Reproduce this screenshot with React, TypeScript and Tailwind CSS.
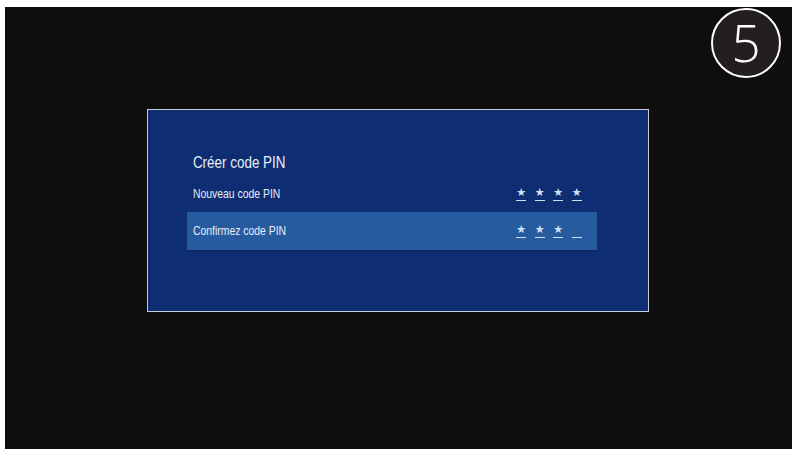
export default function App() {
  const sans = { fontFamily: '"Liberation Sans", Arial, sans-serif' };
  return (
    <div className="relative flex h-[449px] w-full bg-white pl-[5px] pt-[7px]">
      <div className="flex-1 bg-[#0e0e0e] pl-[142px] pt-[102px]" style={sans}>
        <div className="flex h-[203px] w-[502px] flex-col border border-[#c3cbd9] bg-[#0f2d72] pl-[39px] pr-[51px] pt-[41px]">
          <h1 className="h-[24px] origin-left scale-x-[0.84] pl-[7px] text-[16px] leading-[24px] text-[#e8eef8]">Créer code PIN</h1>
          <div className="flex h-[37px] items-center justify-between pl-[6px] pr-[15px] text-[13px] text-[#e8eef8]">
            <span className="origin-left scale-x-[0.8]">Nouveau code PIN</span>
            <PinDigits values={["*", "*", "*", "*"]} />
          </div>
          <div className="flex h-[38px] items-center justify-between bg-[#265c9f] pl-[6px] pr-[15px] text-[13px] text-[#e8eef8] shadow-[0_2px_0_#0c2a66]">
            <span className="origin-left scale-x-[0.8]">Confirmez code PIN</span>
            <PinDigits values={["*", "*", "*", "_"]} />
          </div>
        </div>
      </div>
      <div className="absolute left-[711px] top-[8px] flex h-[70px] w-[70px] items-center justify-center rounded-full border-2 border-white bg-[#231f20] pb-[2px] text-[51px] leading-none text-white" style={{ fontFamily: '"Open Sans", sans-serif', fontWeight: 350 }}>
        5
      </div>
    </div>
  );
}

function PinDigits({ values }: { values: string[] }) {
  return (
    <div className="flex gap-[8px]">
      {values.map((v, i) => (
        <span key={i} className="flex w-[10.5px] flex-col items-center text-[#cfe0f6]">
          <span className="h-[11px] text-[11px] leading-[11px]" style={{ fontFamily: '"DejaVu Sans", sans-serif' }}>{v === "*" ? "★" : ""}</span>
          <span className="mt-[2px] h-[1px] w-[10px] bg-[#cfe0f6]" />
        </span>
      ))}
    </div>
  );
}
